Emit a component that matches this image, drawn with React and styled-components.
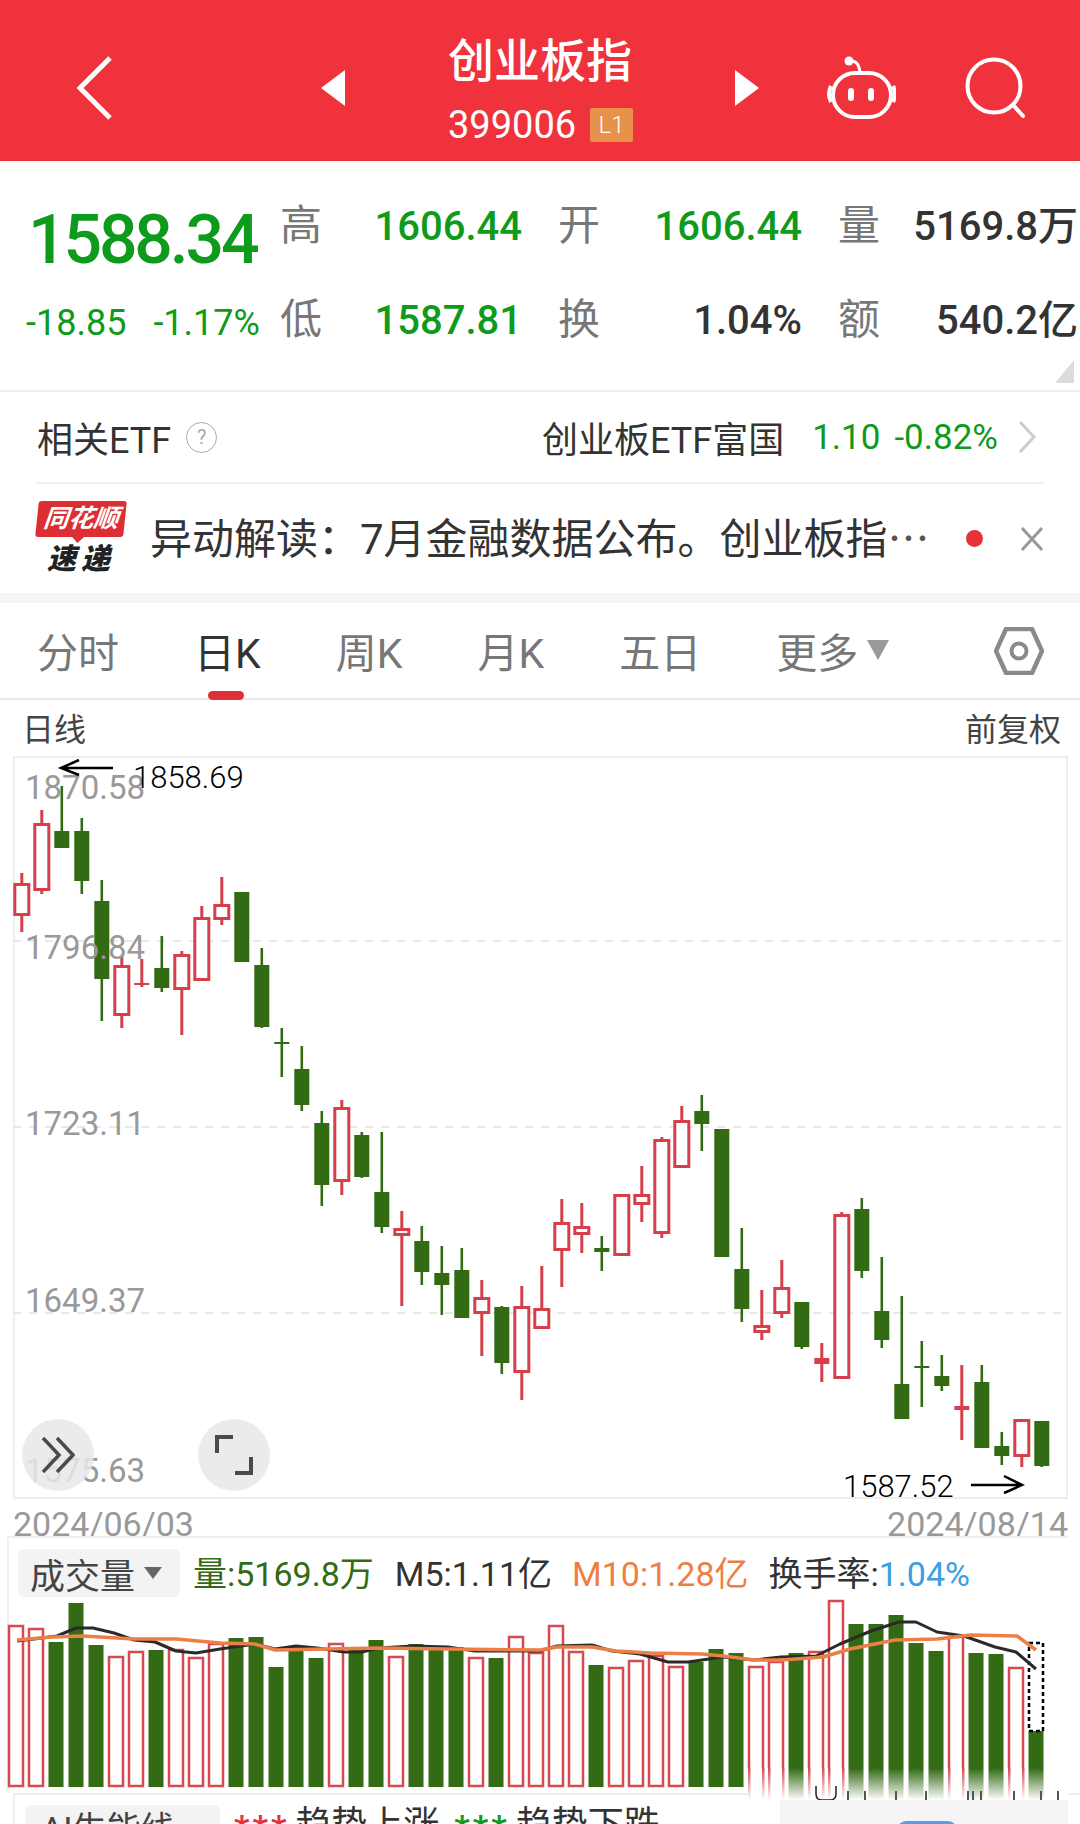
import React from 'react';
import styled, { createGlobalStyle } from 'styled-components';

const FONT = 'Roboto, "Noto Sans CJK SC", sans-serif';
const GREEN = '#0e9a1a';
const CANDLE_GREEN = '#336a14';
const CANDLE_RED = '#d63f49';

// [up, high, bodyTop, bodyBottom, low]
const candles = [
  [1, 874, 884, 917, 933], [1, 811, 824, 892, 895], [0, 787, 832, 849, 849], [0, 819, 832, 882, 895],
  [0, 881, 902, 980, 1022], [1, 957, 966, 1017, 1029], [1, 960, 984, 986, 988], [0, 937, 969, 989, 993],
  [1, 952, 955, 991, 1036], [1, 907, 918, 982, 982], [1, 878, 905, 921, 926], [0, 893, 893, 963, 963],
  [0, 949, 966, 1028, 1029], [0, 1029, 1043, 1045, 1078], [0, 1047, 1070, 1106, 1112], [0, 1112, 1124, 1186, 1207],
  [1, 1101, 1108, 1183, 1196], [0, 1133, 1136, 1178, 1179], [0, 1133, 1193, 1228, 1234], [1, 1212, 1229, 1237, 1307],
  [0, 1227, 1242, 1273, 1286], [0, 1247, 1274, 1286, 1316], [0, 1249, 1271, 1319, 1319], [1, 1281, 1298, 1315, 1357],
  [0, 1307, 1308, 1364, 1375], [1, 1287, 1307, 1374, 1401], [1, 1267, 1309, 1330, 1330], [1, 1200, 1223, 1252, 1288],
  [1, 1204, 1227, 1236, 1254], [0, 1237, 1249, 1253, 1272], [1, 1195, 1195, 1257, 1257], [1, 1167, 1195, 1206, 1223],
  [1, 1138, 1140, 1235, 1239], [1, 1107, 1121, 1169, 1169], [0, 1096, 1112, 1125, 1152], [0, 1130, 1130, 1258, 1258],
  [0, 1229, 1270, 1310, 1323], [1, 1291, 1326, 1334, 1341], [1, 1261, 1288, 1315, 1319], [0, 1303, 1303, 1348, 1350],
  [1, 1344, 1359, 1365, 1383], [1, 1213, 1215, 1380, 1380], [0, 1199, 1210, 1272, 1279], [0, 1258, 1312, 1341, 1349],
  [0, 1297, 1385, 1420, 1420], [0, 1342, 1367, 1369, 1408], [0, 1356, 1377, 1387, 1392], [1, 1366, 1407, 1411, 1441],
  [0, 1366, 1383, 1449, 1449], [0, 1433, 1447, 1457, 1466], [1, 1420, 1420, 1458, 1468], [0, 1422, 1422, 1467, 1468],
];

// [up, top]
const volumes = [
  [1, 1626], [1, 1629], [0, 1643], [0, 1604], [0, 1646], [1, 1657], [1, 1652], [0, 1651], [1, 1650], [1, 1658],
  [1, 1644], [0, 1639], [0, 1638], [0, 1668], [0, 1647], [0, 1659], [1, 1644], [0, 1650], [0, 1641], [1, 1657],
  [0, 1645], [0, 1647], [0, 1648], [1, 1658], [0, 1659], [1, 1637], [1, 1653], [1, 1626], [1, 1652], [0, 1666],
  [1, 1668], [1, 1661], [1, 1656], [1, 1667], [0, 1663], [0, 1650], [0, 1654], [1, 1667], [1, 1662], [0, 1654],
  [1, 1652], [1, 1601], [0, 1625], [0, 1625], [0, 1616], [0, 1644], [0, 1652], [1, 1637], [0, 1654], [0, 1655],
  [1, 1668], [0, 1732],
];

const blackLine = '17,1642 34,1640 57,1637 76,1629 93,1629 114,1634 134,1641 155,1643 176,1652 196,1654 220,1650 255,1645 275,1650 296,1647 317,1649 344,1653 362,1653 379,1649 413,1647 448,1648 475,1652 506,1652 540,1652 557,1647 592,1646 612,1652 640,1655 668,1663 688,1663 723,1658 754,1661 781,1658 816,1657 840,1645 871,1632 899,1623 916,1623 937,1633 964,1637 995,1648 1016,1653 1036,1670';
const orangeLine = '17,1641 52,1638 83,1637 134,1640 176,1640 220,1644 255,1645 275,1651 327,1650 379,1649 448,1650 540,1651 557,1648 592,1648 616,1652 650,1654 702,1655 723,1657 754,1661 781,1661 823,1658 850,1650 895,1641 937,1640 971,1636 1017,1637 1036,1651';

const axisLabels = [
  { text: '1870.58', top: 770 },
  { text: '1796.84', top: 930 },
  { text: '1723.11', top: 1106 },
  { text: '1649.37', top: 1283 },
  { text: '1575.63', top: 1453 },
];

const CHART_TOP = 757;
const CHART_LEFT = 13;

const GlobalStyle = createGlobalStyle`
  html, body {
    margin: 0;
    padding: 0;
    background: #fff;
  }
`;

const Page = styled.div`
  position: relative;
  width: 1080px;
  height: 1824px;
  overflow: hidden;
  background: #fff;
  font-family: ${FONT};
  color: #333;
`;

const Header = styled.div`
  display: flex;
  align-items: center;
  height: 161px;
  padding: 14px 0 0 76px;
  box-sizing: border-box;
  background: #f0323c;
  color: #fff;
`;

const HeaderIcon = styled.svg`
  display: block;
  flex: none;
  margin-left: ${(p) => p.$ml || 0}px;
`;

const TitleBlock = styled.div`
  flex: none;
  width: 185px;
  margin-left: 103px;
  display: flex;
  flex-direction: column;
  align-items: flex-start;
  gap: 17px;
`;

const Title = styled.div`
  font-size: 46px;
  line-height: 54px;
  height: 54px;
  font-weight: 500;
  white-space: nowrap;
  margin-top: 4px;
`;

const CodeRow = styled.div`
  display: flex;
  align-items: center;
  height: 40px;
`;

const Code = styled.span`
  font-size: 38px;
  line-height: 40px;
  width: 127px;
  white-space: nowrap;
`;

const LevelBadge = styled.span`
  width: 43px;
  height: 34px;
  margin-left: 15px;
  background: #e8914a;
  border-radius: 2px;
  font-size: 24px;
  line-height: 34px;
  font-weight: 300;
  text-align: center;
`;

const Stats = styled.div`
  position: relative;
  display: grid;
  grid-template-columns: 252px 42px 198px 38px 42px 200px 38px 42px 196px;
  grid-auto-rows: 94px;
  align-items: center;
  height: 231px;
  padding: 18px 4px 0 30px;
  box-sizing: border-box;
  border-bottom: 2px solid #ececec;
`;

const Price = styled.div`
  margin: 28px 0 0 -2px;
  font-size: 68px;
  line-height: 70px;
  font-weight: 500;
  letter-spacing: -3.2px;
  color: ${GREEN};
`;

const DeltaRow = styled.div`
  display: flex;
  gap: 27px;
  margin-left: -4px;
  margin-top: 5px;
  font-size: 36px;
  color: ${GREEN};
  white-space: nowrap;
`;

const StatLabel = styled.div`
  margin-left: -2px;
  font-size: 42px;
  line-height: 48px;
  color: #777;
`;

const StatValue = styled.div`
  margin-top: 2px;
  font-size: 40px;
  line-height: 48px;
  font-weight: 500;
  text-align: right;
  white-space: nowrap;
  color: ${(p) => (p.$green ? GREEN : '#333')};
`;

const CornerMark = styled.div`
  position: absolute;
  right: 6px;
  bottom: 7px;
  width: 0;
  height: 0;
  border-left: 19px solid transparent;
  border-bottom: 23px solid #dcdcdc;
`;

const EtfRow = styled.div`
  display: flex;
  align-items: center;
  height: 90px;
  margin: 0 36px;
  border-bottom: 2px solid #f0f0f0;
`;

const EtfLabel = styled.span`
  font-size: 36px;
  margin-left: 1px;
  color: #333;
`;

const HelpMark = styled.span`
  width: 29px;
  height: 29px;
  margin-left: 15px;
  border: 1.5px solid #aaa;
  border-radius: 50%;
  font-size: 20px;
  line-height: 29px;
  text-align: center;
  color: #aaa;
`;

const EtfName = styled.span`
  margin-left: auto;
  font-size: 36px;
  color: #333;
`;

const EtfQuote = styled.span`
  margin-left: ${(p) => p.$ml}px;
  font-size: 35px;
  color: ${GREEN};
`;

const EtfArrow = styled.svg`
  display: block;
  margin: 0 8px 0 20px;
`;

const NewsRow = styled.div`
  display: flex;
  align-items: center;
  height: 109px;
  padding-left: 37px;
  box-sizing: border-box;
`;

const Logo = styled.div`
  flex: none;
  width: 88px;
  height: 76px;
`;

const LogoBubble = styled.div`
  position: relative;
  height: 36px;
  background: #dd2f33;
  border-radius: 3px;
  transform: skewX(-6deg);
  color: #fff;
  font-size: 25px;
  line-height: 36px;
  font-weight: 700;
  font-style: italic;
  text-align: center;
  white-space: nowrap;
  &::after {
    content: '';
    position: absolute;
    left: 36px;
    bottom: -6px;
    border-left: 7px solid transparent;
    border-right: 7px solid transparent;
    border-top: 7px solid #dd2f33;
  }
`;

const LogoSub = styled.div`
  margin-top: 6px;
  font-size: 29px;
  line-height: 32px;
  font-weight: 900;
  font-style: italic;
  letter-spacing: 5px;
  text-align: center;
  color: #222;
`;

const NewsText = styled.div`
  flex: none;
  width: 782px;
  margin: -6px 0 0 25px;
  font-size: 42px;
  white-space: nowrap;
  color: #333;
`;

const NewsEllipsis = styled.span`
  font-family: "Noto Sans CJK SC", sans-serif;
  color: #555;
`;

const NewsDot = styled.span`
  flex: none;
  width: 17px;
  height: 17px;
  margin-left: 34px;
  border-radius: 50%;
  background: #e6303a;
`;

const NewsClose = styled.svg`
  display: block;
  flex: none;
  margin-left: 37px;
`;

const Band = styled.div`
  height: 10px;
  background: #f5f5f5;
`;

const Tabs = styled.div`
  display: flex;
  align-items: center;
  gap: 75px;
  height: 97px;
  padding: 6px 0 0 37px;
  box-sizing: border-box;
  border-bottom: 2px solid #eaeaea;
`;

const Tab = styled.div`
  position: relative;
  display: flex;
  align-items: center;
  font-size: 41px;
  line-height: 48px;
  color: ${(p) => (p.$active ? '#333' : '#777')};
  &::after {
    content: '';
    display: ${(p) => (p.$active ? 'block' : 'none')};
    position: absolute;
    left: 14px;
    top: 61px;
    width: 36px;
    height: 9px;
    border-radius: 5px;
    background: #dd3138;
  }
`;

const TabCaret = styled.span`
  width: 0;
  height: 0;
  margin: -8px 0 0 9px;
  border-left: 11px solid transparent;
  border-right: 11px solid transparent;
  border-top: 20px solid #999;
`;

const SettingsIcon = styled.svg`
  display: block;
  margin: -6px 0 0 30px;
`;

const SubHeader = styled.div`
  display: flex;
  justify-content: space-between;
  align-items: center;
  height: 56px;
  padding: 0 19px 2px 22px;
  box-sizing: border-box;
  font-size: 32px;
  color: #444;
`;

const ChartBox = styled.div`
  position: relative;
  width: 1055px;
  height: 743px;
  margin-left: ${CHART_LEFT}px;
  box-sizing: border-box;
  border: 2px solid #eee;
  overflow: visible;
`;

const ChartSvg = styled.svg`
  display: block;
  position: absolute;
  left: -2px;
  top: -2px;
`;

const AxisLabel = styled.span`
  position: absolute;
  left: 10px;
  top: ${(p) => p.$top - CHART_TOP - 2}px;
  font-size: 33px;
  line-height: 38px;
  color: #999;
`;

const PriceNote = styled.span`
  position: absolute;
  left: ${(p) => p.$left}px;
  top: ${(p) => p.$top}px;
  font-size: 31px;
  line-height: 36px;
  font-weight: 300;
  color: #000;
`;

const RoundButton = styled.div`
  position: absolute;
  left: ${(p) => p.$left}px;
  top: 661px;
  width: 72px;
  height: 72px;
  display: flex;
  align-items: center;
  justify-content: center;
  border-radius: 50%;
  background: rgba(232, 232, 232, 0.85);
`;

const DateRow = styled.div`
  display: flex;
  justify-content: space-between;
  width: 1055px;
  height: 37px;
  margin-left: ${CHART_LEFT}px;
  font-size: 34px;
  line-height: 50px;
  color: #999;
`;

const VolumePanel = styled.div`
  position: relative;
  width: 1061px;
  height: 257px;
  margin-left: 7px;
  box-sizing: border-box;
  border-top: 2px solid #eee;
  border-left: 2px solid #f2f2f2;
`;

const Legend = styled.div`
  display: flex;
  align-items: center;
  height: 61px;
  padding: 9px 0 0 9px;
  box-sizing: border-box;
  font-size: 34px;
  white-space: nowrap;
  color: #333;
`;

const Selector = styled.div`
  display: flex;
  align-items: center;
  width: 162px;
  height: 48px;
  padding-left: 12px;
  box-sizing: border-box;
  flex: none;
  background: #f3f3f3;
  border-radius: 6px;
  font-size: 35px;
  color: #444;
`;

const SelectorCaret = styled.span`
  width: 0;
  height: 0;
  margin-left: 9px;
  border-left: 9px solid transparent;
  border-right: 9px solid transparent;
  border-top: 12px solid #666;
`;

const LegendItem = styled.span`
  margin-left: ${(p) => p.$ml}px;
  margin-top: -3px;
  color: ${(p) => p.$color || '#333'};
`;

const VolumeSvg = styled.svg`
  display: block;
  margin-left: -2px;
`;

const BottomPanel = styled.div`
  display: flex;
  align-items: flex-start;
  height: 30px;
  margin-left: 13px;
  border-top: 2px solid #eee;
  border-left: 2px solid #eee;
  font-size: 36px;
  line-height: 48px;
  white-space: nowrap;
`;

const AiSelector = styled.div`
  width: 195px;
  height: 48px;
  margin: 10px 0 0 10px;
  padding-left: 16px;
  box-sizing: border-box;
  flex: none;
  background: #f3f3f3;
  border-radius: 6px;
  font-size: 34px;
  color: #444;
`;

const Stars = styled.span`
  margin: 8px 6px 0 ${(p) => p.$ml}px;
  font-size: 34px;
  font-weight: 700;
  letter-spacing: 3px;
  color: ${(p) => p.$color};
`;

const TrendText = styled.span`
  margin-top: 6px;
  color: #333;
`;

const Smear = styled.svg`
  display: block;
  position: absolute;
  left: 747px;
  top: 1768px;
`;

const GhostPanel = styled.div`
  position: absolute;
  left: 780px;
  top: 1800px;
  width: 288px;
  height: 24px;
  background: #f5f5f5;
`;

const GhostPill = styled.div`
  position: absolute;
  left: 117px;
  top: 21px;
  width: 60px;
  height: 20px;
  border-radius: 9px;
  background: #5b9be8;
`;

const Candle = ({ data, index }) => {
  const [up, high, top, bottom, low] = data;
  const x = 21.8 + 20 * index;
  const color = up ? CANDLE_RED : CANDLE_GREEN;
  const thin = bottom - top <= 6;
  return (
    <g>
      <line x1={x} x2={x} y1={high} y2={low} stroke={color} strokeWidth={up ? 3 : 2.6} />
      {thin || !up ? (
        <rect x={x - 7.5} y={top} width={15} height={bottom - top} fill={color} />
      ) : (
        <rect x={x - 7} y={top + 1.5} width={14} height={bottom - top - 3} fill="#fff" stroke={color} strokeWidth={3} />
      )}
    </g>
  );
};

const VolumeBar = ({ data, index }) => {
  const [up, top] = data;
  const x = 16 + 20 * index;
  if (up) {
    return <rect x={x - 7} y={top + 1} width={14} height={1787 - top - 1} fill="#fff" stroke="#d64a52" strokeWidth={2.5} />;
  }
  return <rect x={x - 7.5} y={top} width={15} height={1788 - top} fill={CANDLE_GREEN} />;
};

const SmearBars = () => (
  <Smear width="321" height="34" viewBox="747 1768 321 34">
    <defs>
      <linearGradient id="fadeGreen" x1="0" y1="0" x2="0" y2="1">
        <stop offset="0" stopColor={CANDLE_GREEN} />
        <stop offset="1" stopColor={CANDLE_GREEN} stopOpacity="0" />
      </linearGradient>
      <linearGradient id="fadeRed" x1="0" y1="0" x2="0" y2="1">
        <stop offset="0" stopColor="#d64a52" />
        <stop offset="1" stopColor="#d64a52" stopOpacity="0" />
      </linearGradient>
    </defs>
    <rect x="747" y="1768" width="321" height="34" fill="#fff" />
    {volumes.map((v, i) => {
      const x = 16 + 20 * i;
      if (x < 750) return null;
      if (v[0]) {
        return (
          <g key={i}>
            <rect x={x - 8} y="1768" width="2.5" height="32" fill="url(#fadeRed)" />
            <rect x={x + 6} y="1768" width="2.5" height="32" fill="url(#fadeRed)" />
          </g>
        );
      }
      return <rect key={i} x={x - 7.5} y="1768" width="15" height="32" fill="url(#fadeGreen)" />;
    })}
    <path d="M816 1786v8q0 6 6 6h8q6 0 6-6v-8" fill="none" stroke="#222" strokeWidth="1.5" />
    {[847, 864, 895, 925, 967, 972, 980, 1013, 1040, 1057].map((x) => (
      <rect key={x} x={x} y="1791" width="2" height="9" fill="#555" />
    ))}
  </Smear>
);

const App = () => (
  <Page>
    <GlobalStyle />
    <Header>
      <HeaderIcon width="36" height="64" viewBox="0 0 36 64" fill="none" stroke="#fff" strokeWidth="5">
        <path d="M34 2 4 32l30 30" strokeLinejoin="miter" />
      </HeaderIcon>
      <HeaderIcon $ml={209} width="24" height="36" viewBox="0 0 24 36" fill="#fff">
        <path d="M24 0v36L0 18z" />
      </HeaderIcon>
      <TitleBlock>
        <Title>创业板指</Title>
        <CodeRow>
          <Code>399006</Code>
          <LevelBadge>L1</LevelBadge>
        </CodeRow>
      </TitleBlock>
      <HeaderIcon $ml={102} width="24" height="36" viewBox="0 0 24 36" fill="#fff">
        <path d="M0 0v36l24-18z" />
      </HeaderIcon>
      <HeaderIcon $ml={67} width="70" height="68" viewBox="826 54 70 68" fill="none" stroke="#fff" strokeWidth="4">
        <rect x="833" y="73" width="58" height="44" rx="22" />
        <path d="M850 61q9-1 10 12" strokeWidth="3" />
        <circle cx="849" cy="61" r="4.5" fill="#fff" stroke="none" />
        <rect x="848" y="88" width="6" height="13" rx="3" fill="#fff" stroke="none" />
        <rect x="868" y="88" width="6" height="13" rx="3" fill="#fff" stroke="none" />
        <path d="M831 86q-4 8 0 16M893 86q4 8 0 16" strokeWidth="4" />
      </HeaderIcon>
      <HeaderIcon $ml={69} width="62" height="62" viewBox="965 58 62 62" fill="none" stroke="#fff" strokeWidth="4">
        <circle cx="994" cy="87" r="26.5" />
        <path d="m1014 107 9 10" strokeLinecap="round" />
      </HeaderIcon>
    </Header>

    <Stats>
      <Price>1588.34</Price>
      <StatLabel>高</StatLabel>
      <StatValue $green>1606.44</StatValue>
      <span />
      <StatLabel>开</StatLabel>
      <StatValue $green>1606.44</StatValue>
      <span />
      <StatLabel>量</StatLabel>
      <StatValue>5169.8万</StatValue>
      <DeltaRow>
        <span>-18.85</span>
        <span>-1.17%</span>
      </DeltaRow>
      <StatLabel>低</StatLabel>
      <StatValue $green>1587.81</StatValue>
      <span />
      <StatLabel>换</StatLabel>
      <StatValue>1.04%</StatValue>
      <span />
      <StatLabel>额</StatLabel>
      <StatValue>540.2亿</StatValue>
      <CornerMark />
    </Stats>

    <EtfRow>
      <EtfLabel>相关ETF</EtfLabel>
      <HelpMark>?</HelpMark>
      <EtfName>创业板ETF富国</EtfName>
      <EtfQuote $ml={28}>1.10</EtfQuote>
      <EtfQuote $ml={14}>-0.82%</EtfQuote>
      <EtfArrow width="18" height="32" viewBox="0 0 18 32" fill="none" stroke="#ccc" strokeWidth="3">
        <path d="m2 1 14 15L2 31" />
      </EtfArrow>
    </EtfRow>

    <NewsRow>
      <Logo>
        <LogoBubble>同花顺</LogoBubble>
        <LogoSub>速递</LogoSub>
      </Logo>
      <NewsText>
        异动解读：7月金融数据公布。创业板指<NewsEllipsis>…</NewsEllipsis>
      </NewsText>
      <NewsDot />
      <NewsClose width="24" height="26" viewBox="0 0 24 26" fill="none" stroke="#999" strokeWidth="3">
        <path d="m2 2 20 22M22 2 2 24" />
      </NewsClose>
    </NewsRow>
    <Band />

    <Tabs>
      <Tab>分时</Tab>
      <Tab $active>日K</Tab>
      <Tab>周K</Tab>
      <Tab>月K</Tab>
      <Tab>五日</Tab>
      <Tab>
        更多
        <TabCaret />
      </Tab>
      <SettingsIcon width="50" height="48" viewBox="995 628 50 48" fill="none" stroke="#8a8a8a" strokeWidth="4.5">
        <path d="M1007 630h26l10 22-10 22h-26l-10-22z" strokeLinejoin="round" />
        <circle cx="1020" cy="652" r="7.5" strokeWidth="4" />
      </SettingsIcon>
    </Tabs>

    <SubHeader>
      <span>日线</span>
      <span>前复权</span>
    </SubHeader>

    <ChartBox>
      <ChartSvg width="1055" height="743" viewBox={`${CHART_LEFT} ${CHART_TOP} 1055 743`}>
        {[942, 1128, 1314].map((y) => (
          <line key={y} x1="13" x2="1068" y1={y} y2={y} stroke="#e8e8e8" strokeWidth="2" strokeDasharray="8 8" />
        ))}
        {candles.map((c, i) => (
          <Candle key={i} data={c} index={i} />
        ))}
      </ChartSvg>
      {axisLabels.map((l) => (
        <AxisLabel key={l.text} $top={l.top}>
          {l.text}
        </AxisLabel>
      ))}
      <PriceNote $left={118} $top={2}>1858.69</PriceNote>
      <PriceNote $left={828} $top={711}>1587.52</PriceNote>
      <ChartSvg width="1055" height="743" viewBox={`${CHART_LEFT} ${CHART_TOP} 1055 743`} fill="none" stroke="#000" strokeWidth="2.5">
        <path d="M113 769H62m17-8-18 8 18 7" />
        <path d="M971 1486h50m-17-9 18 9-18 8" />
      </ChartSvg>
      <RoundButton $left={7}>
        <svg width="34" height="38" viewBox="0 0 34 38" fill="none" stroke="#4a4a4a" strokeWidth="3.5">
          <path d="m2 2 16 17L2 36M16 2l16 17-16 17" />
        </svg>
      </RoundButton>
      <RoundButton $left={183}>
        <svg width="38" height="40" viewBox="0 0 38 40" fill="none" stroke="#4a4a4a" strokeWidth="4">
          <path d="M18 2H2v16M36 22v16H20" />
        </svg>
      </RoundButton>
    </ChartBox>

    <DateRow>
      <span>2024/06/03</span>
      <span>2024/08/14</span>
    </DateRow>

    <VolumePanel>
      <Legend>
        <Selector>
          成交量
          <SelectorCaret />
        </Selector>
        <LegendItem $ml={13} $color={CANDLE_GREEN}>量:5169.8万</LegendItem>
        <LegendItem $ml={21}>M5:1.11亿</LegendItem>
        <LegendItem $ml={20} $color="#ec7f45">M10:1.28亿</LegendItem>
        <LegendItem $ml={20}>
          换手率:<LegendItem $ml={0} $color="#3a9fdf">1.04%</LegendItem>
        </LegendItem>
      </Legend>
      <VolumeSvg width="1061" height="194" viewBox="7 1600 1061 194">
        {volumes.map((v, i) => (
          <VolumeBar key={i} data={v} index={i} />
        ))}
        <rect x="1029" y="1644" width="14" height="88" fill="#fff" stroke="#000" strokeWidth="2.5" strokeDasharray="4 3" />
        <polyline points={blackLine} fill="none" stroke="#2a2a2a" strokeWidth="3" strokeLinejoin="round" />
        <polyline points={orangeLine} fill="none" stroke="#ec7f45" strokeWidth="3.5" strokeLinejoin="round" />
      </VolumeSvg>
    </VolumePanel>

    <BottomPanel>
      <AiSelector>AI生能线</AiSelector>
      <Stars $ml={14} $color="#e6303a">***</Stars>
      <TrendText>趋势上涨</TrendText>
      <Stars $ml={15} $color={GREEN}>***</Stars>
      <TrendText>趋势下跌</TrendText>
    </BottomPanel>

    <SmearBars />
    <GhostPanel>
      <GhostPill />
    </GhostPanel>
  </Page>
);

export default App;
